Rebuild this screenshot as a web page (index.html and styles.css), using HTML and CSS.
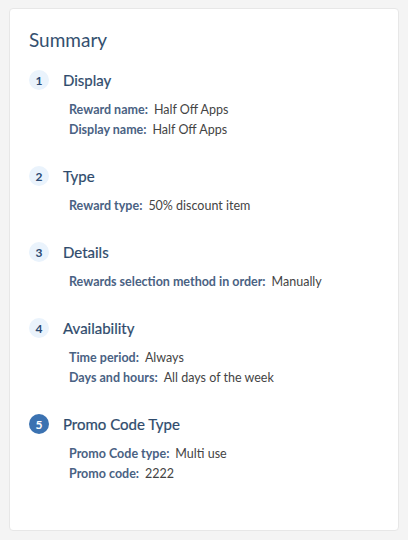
FILE: index.html
```html
<!DOCTYPE html>
<html>
<head>
<meta charset="utf-8">
<link rel="stylesheet" href="styles.css">
</head>
<body>
<div class="card">
  <h1 class="title">Summary</h1>
  <div class="step">
    <div class="step-head"><span class="num">1</span><span class="step-title">Display</span></div>
    <div class="rows">
      <div class="row"><span class="label">Reward name:</span><span class="value">Half Off Apps</span></div>
      <div class="row"><span class="label">Display name:</span><span class="value">Half Off Apps</span></div>
    </div>
  </div>
  <div class="step">
    <div class="step-head"><span class="num">2</span><span class="step-title">Type</span></div>
    <div class="rows">
      <div class="row"><span class="label">Reward type:</span><span class="value">50% discount item</span></div>
    </div>
  </div>
  <div class="step">
    <div class="step-head"><span class="num">3</span><span class="step-title">Details</span></div>
    <div class="rows">
      <div class="row"><span class="label">Rewards selection method in order:</span><span class="value">Manually</span></div>
    </div>
  </div>
  <div class="step">
    <div class="step-head"><span class="num">4</span><span class="step-title">Availability</span></div>
    <div class="rows">
      <div class="row"><span class="label">Time period:</span><span class="value">Always</span></div>
      <div class="row"><span class="label">Days and hours:</span><span class="value">All days of the week</span></div>
    </div>
  </div>
  <div class="step">
    <div class="step-head"><span class="num active">5</span><span class="step-title">Promo Code Type</span></div>
    <div class="rows">
      <div class="row"><span class="label">Promo Code type:</span><span class="value">Multi use</span></div>
      <div class="row"><span class="label">Promo code:</span><span class="value">2222</span></div>
    </div>
  </div>
</div>
</body>
</html>
```
FILE: styles.css
```css
html, body {
  margin: 0;
  padding: 0;
  background: #f4f4f4;
}
body {
  padding: 8px 9px 9px 9px;
  font-family: Lato, "Open Sans", sans-serif;
}
.card {
  box-sizing: border-box;
  width: 390px;
  height: 523px;
  background: #fff;
  border: 1px solid #e7e7e7;
  border-radius: 4px;
  padding: 19px 19px 0 19px;
}
.title {
  margin: 0 0 18px 0;
  font-size: 19px;
  line-height: 24px;
  font-weight: 400;
  color: #34506f;
}
.step {
  margin-bottom: 26px;
}
.step-head {
  display: flex;
  align-items: center;
  height: 20px;
}
.num {
  width: 20px;
  height: 20px;
  border-radius: 50%;
  background: #eaf3fc;
  color: #2a4a73;
  font-size: 12px;
  font-weight: 700;
  display: flex;
  align-items: center;
  justify-content: center;
  margin-right: 14px;
}
.num.active {
  background: #3b72b1;
  color: #fff;
}
.step-title {
  font-size: 15px;
  color: #2f4b6c;
  font-weight: 400;
  -webkit-text-stroke: 0.2px #2f4b6c;
}
.rows {
  margin-top: 10px;
  padding-left: 40px;
}
.row {
  display: flex;
  align-items: center;
  height: 20px;
  font-size: 12.5px;
  line-height: 20px;
}
.label {
  color: #4a6283;
  font-weight: 700;
  margin-right: 6px;
}
.value {
  color: #444;
}
```
